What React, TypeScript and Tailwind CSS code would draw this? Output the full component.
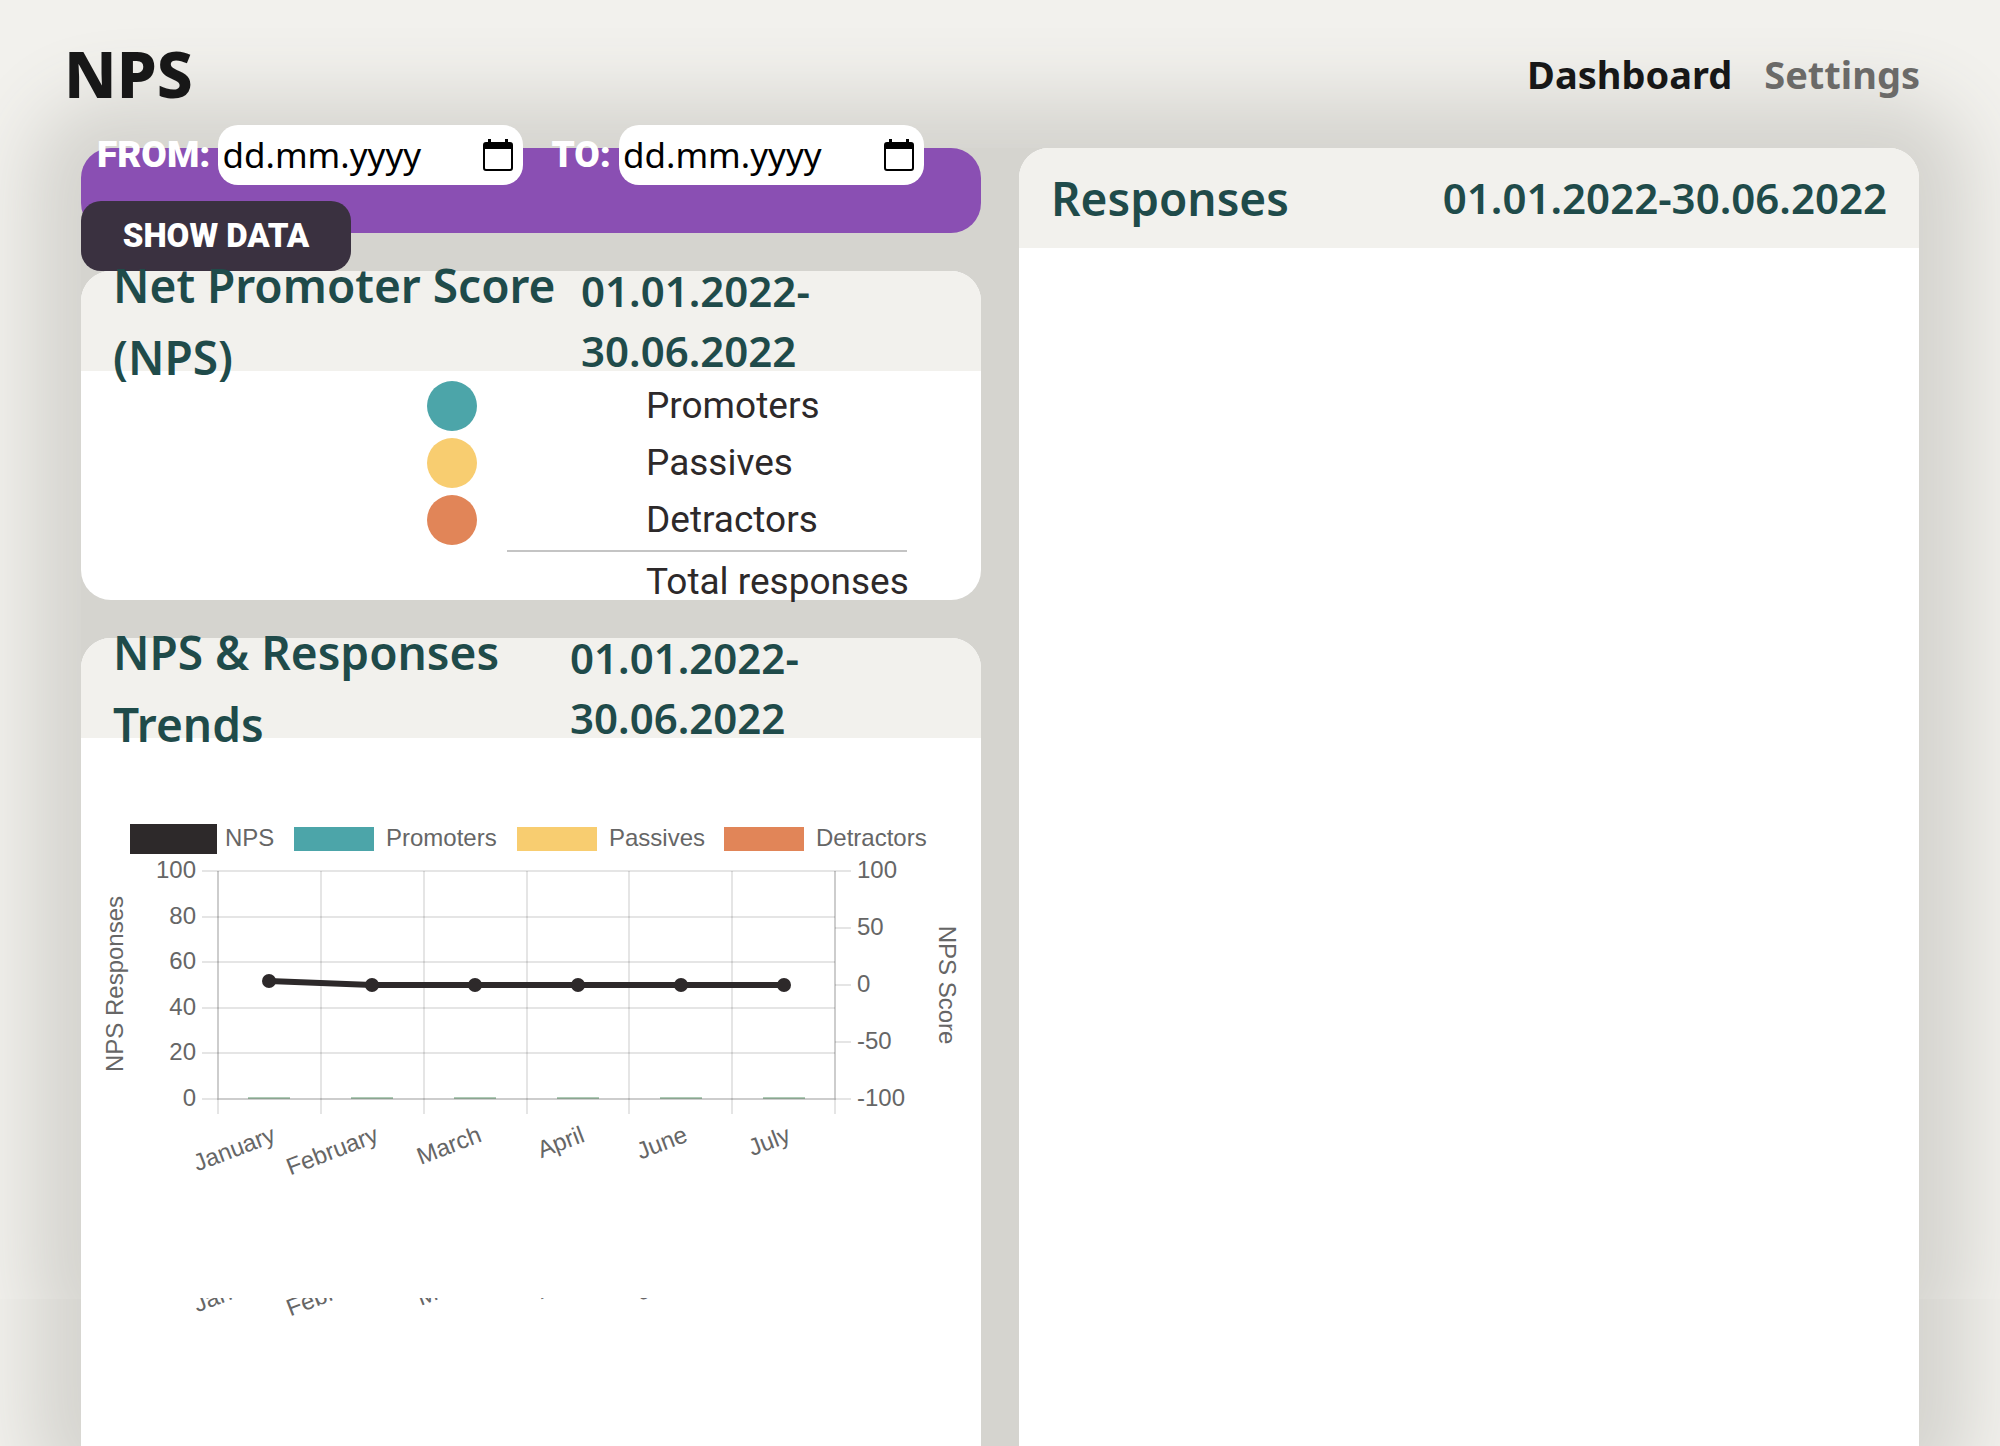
import React from "react";

const RANGE = "01.01.2022-30.06.2022";
const MONTHS = ["January", "February", "March", "April", "June", "July"];
const GROUPS = [
  { name: "Promoters", dot: "bg-[#4ca5a9]" },
  { name: "Passives", dot: "bg-[#f8cd70]" },
  { name: "Detractors", dot: "bg-[#e18558]" },
];

const heading = "font-['Noto_Sans',sans-serif] font-semibold text-[#1f4b4a]";

function Backdrop() {
  return (
    <div aria-hidden="true" className="absolute inset-0 -z-10 flex flex-col overflow-hidden">
      <div className="h-[1299px] shrink-0 overflow-hidden px-[81px] pt-[148px]">
        <div className="h-[1160px] rounded-[30px] bg-[#d5d4cf] shadow-[0_0_72px_50px_#d5d4cf]" />
      </div>
      <div className="h-[147px] shrink-0 overflow-hidden px-[81px]">
        <div className="-mt-[200px] h-[356px] rounded-[30px] bg-[#d5d4cf] shadow-[0_0_72px_50px_#d5d4cf]" />
      </div>
    </div>
  );
}

function CalendarIcon() {
  return (
    <svg viewBox="0 0 30 32" className="h-8 w-[30px]" aria-hidden="true">
      <path
        fill="#000"
        fillRule="evenodd"
        d="M5 0h3v3h14V0h3v3h2a3 3 0 0 1 3 3v23a3 3 0 0 1-3 3H3a3 3 0 0 1-3-3V6a3 3 0 0 1 3-3h2zM2 10v19a1 1 0 0 0 1 1h24a1 1 0 0 0 1-1V10z"
      />
    </svg>
  );
}

function DateField({ id, label }: { id: string; label: string }) {
  return (
    <div className="flex items-center gap-2">
      <label htmlFor={id} className="font-['Roboto',sans-serif] text-[37px] font-black text-white">
        {label}
      </label>
      <div className="flex h-[60px] w-[305px] items-center rounded-[20px] bg-white pr-[10px] pl-1">
        <input
          id={id}
          type="text"
          placeholder="dd.mm.yyyy"
          className="h-12 min-w-0 flex-1 font-['Noto_Sans',sans-serif] text-[35px] text-black outline-none placeholder:text-black"
        />
        <button type="button" aria-label={`Pick date ${label}`}>
          <CalendarIcon />
        </button>
      </div>
    </div>
  );
}

function CardHeader({ title, dateClass }: { title: string; dateClass: string }) {
  return (
    <header className="flex h-[100px] shrink-0 items-center justify-between rounded-t-[30px] bg-[#f2f1ed] px-8">
      <h2 className={`${heading} text-[46px] leading-[72px]`}>{title}</h2>
      <p className={`${heading} ${dateClass} shrink-0 text-[42px] leading-[60px]`}>{RANGE}</p>
    </header>
  );
}

function MonthLabels({ dy }: { dy: number }) {
  return (
    <g textAnchor="end">
      {MONTHS.map((m, i) => (
        <text key={m} transform={`translate(${196 + i * 103} ${403 + dy}) rotate(-21)`}>
          {m}
        </text>
      ))}
    </g>
  );
}

function TrendsChart() {
  const left = 137;
  const right = 754;
  const top = 133;
  const bottom = 361;
  const span = (right - left) / MONTHS.length;
  const columns = [0, 1, 2, 3, 4, 5, 6].map((i) => Math.round(left + i * span));
  const xs = MONTHS.map((_, i) => Math.round(left + (i + 0.5) * span));
  const ys = [243, 247, 247, 247, 247, 247];
  return (
    <svg
      viewBox="0 0 900 600"
      className="w-full font-['Liberation_Sans',Arial,sans-serif] text-[24px]"
      fill="#666"
      role="img"
      aria-label="NPS and responses trends"
    >
      <defs>
        <clipPath id="lower-labels">
          <rect x="0" y="560" width="900" height="40" />
        </clipPath>
      </defs>

      <rect x="49" y="86" width="87" height="30" fill="#2d292a" />
      <text x="144" y="108">NPS</text>
      <rect x="213" y="89" width="80" height="24" fill="#4ca5a9" />
      <text x="305" y="108">Promoters</text>
      <rect x="436" y="89" width="80" height="24" fill="#f8cd70" />
      <text x="528" y="108">Passives</text>
      <rect x="643" y="89" width="80" height="24" fill="#e18558" />
      <text x="735" y="108">Detractors</text>

      {xs.map((x) => (
        <rect key={x} x={x - 21} y="359" width="42" height="2" fill="#8bb596" fillOpacity="0.7" />
      ))}

      <g stroke="#000" strokeOpacity="0.1" strokeWidth="2">
        {[0, 1, 2, 3, 4, 5].map((i) => (
          <line key={i} x1={left - 16} x2={right} y1={top + Math.round(i * 45.6)} y2={top + Math.round(i * 45.6)} />
        ))}
        {[0, 1, 2, 3, 4].map((i) => (
          <line key={i} x1={right} x2={right + 16} y1={top + i * 57} y2={top + i * 57} />
        ))}
        {columns.map((x) => (
          <line key={x} y1={top} y2={bottom + 15} x1={x} x2={x} />
        ))}
        <path d={`M${left} ${top}V${bottom}H${right}V${top}`} fill="none" />
      </g>

      <polyline points={xs.map((x, i) => `${x},${ys[i]}`).join(" ")} fill="none" stroke="#2d292a" strokeWidth="6" />
      {xs.map((x, i) => (
        <circle key={x} cx={x} cy={ys[i]} r="7" fill="#2d292a" />
      ))}

      <g textAnchor="end">
        {[100, 80, 60, 40, 20, 0].map((v, i) => (
          <text key={v} x="115" y={140 + Math.round(i * 45.6)}>{v}</text>
        ))}
      </g>
      {[100, 50, 0, -50, -100].map((v, i) => (
        <text key={v} x="776" y={140 + i * 57}>{v}</text>
      ))}

      <text textAnchor="middle" transform="translate(42 246) rotate(-90)">NPS Responses</text>
      <text textAnchor="middle" transform="translate(858 247) rotate(90)">NPS Score</text>

      <MonthLabels dy={0} />
      <g clipPath="url(#lower-labels)">
        <MonthLabels dy={141} />
      </g>
    </svg>
  );
}

export default function App() {
  return (
    <div className="relative isolate flex min-h-screen flex-col overflow-hidden bg-[#f2f1ed]">
      <Backdrop />
      <header className="flex h-[148px] shrink-0 items-center justify-between pr-20 pl-16 font-['Noto_Sans',sans-serif]">
        <h1 className="text-[64px] font-extrabold text-[#171717]">NPS</h1>
        <nav className="flex gap-8 text-[38px] font-bold">
          <a href="#dashboard" className="text-[#171717]">Dashboard</a>
          <a href="#settings" className="text-[#6b6a68]">Settings</a>
        </nav>
      </header>

      <main className="mx-[81px] grid flex-1 grid-cols-2 gap-[38px] rounded-t-[30px] bg-[#d5d4cf]">
        <div className="flex flex-col gap-[38px]">
          <form className="h-[85px] shrink-0 rounded-[30px] bg-[#8a4fb3]">
            <div className="-mt-[23px] flex flex-col items-start gap-4">
              <div className="flex gap-7 pl-4">
                <DateField id="from" label="FROM:" />
                <DateField id="to" label="TO:" />
              </div>
              <button
                type="button"
                className="h-[70px] w-[270px] shrink-0 rounded-[20px] bg-[#3a3140] font-['Roboto',sans-serif] text-[33px] font-black text-white"
              >
                SHOW DATA
              </button>
            </div>
          </form>

          <section className="h-[329px] shrink-0 rounded-[30px] bg-white">
            <CardHeader title="Net Promoter Score (NPS)" dateClass="w-[368px]" />
            <div className="pt-[10px] font-['Roboto',sans-serif] text-[37px] text-[#2d292a]">
              <ul className="flex flex-col gap-[7px]">
                {GROUPS.map((g) => (
                  <li key={g.name} className="flex h-[50px] items-center pl-[346px]">
                    <span className={`${g.dot} mr-[169px] size-[50px] shrink-0 rounded-full`} />
                    {g.name}
                  </li>
                ))}
              </ul>
              <hr className="mt-[5px] ml-[426px] w-[400px] border-t-2 border-[#c4c4c4]" />
              <p className="pl-[565px] leading-[60px]">Total responses</p>
            </div>
          </section>

          <section className="flex-1 rounded-t-[30px] bg-white">
            <CardHeader title="NPS & Responses Trends" dateClass="w-[379px]" />
            <TrendsChart />
          </section>
        </div>

        <section className="rounded-t-[30px] bg-white">
          <CardHeader title="Responses" dateClass="" />
        </section>
      </main>
    </div>
  );
}
